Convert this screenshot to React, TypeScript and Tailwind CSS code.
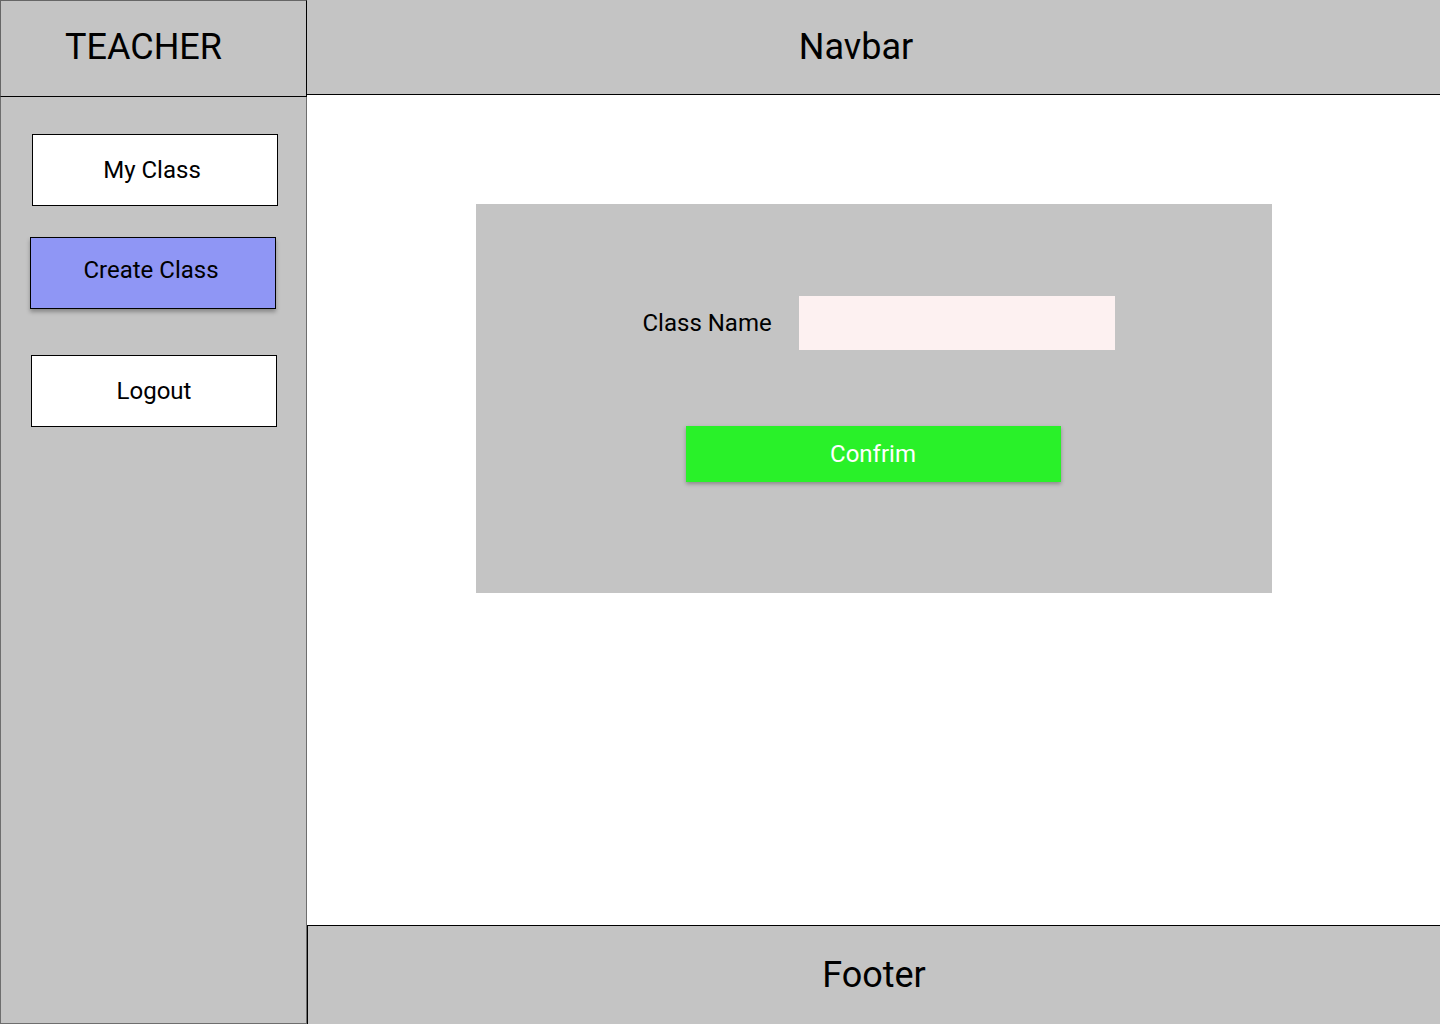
export default function App() {
  return (
    <div
      className="grid h-[1024px] w-[1440px] grid-cols-[307px_1fr] bg-white text-black"
      style={{ fontFamily: "Roboto, 'Liberation Sans', sans-serif" }}
    >
      {/* left column */}
      <div className="flex h-[1024px] flex-col">
        <div className="flex h-[97px] items-center border-t border-l border-r border-b border-t-[#666] border-l-[#666] border-r-black border-b-black bg-[#c4c4c4] pb-[4px] pl-[64px]">
          <span className="text-[36px] leading-none">TEACHER</span>
        </div>
        <aside className="flex flex-1 flex-col border-x border-b border-[#6e6e6e] bg-[#c4c4c4]">
          <button className="ml-[31px] mt-[37px] flex h-[72px] w-[246px] items-center justify-center border border-black bg-white pr-[6px] text-[24px]">
            My Class
          </button>
          <button className="ml-[29px] mt-[31px] flex h-[72px] w-[246px] items-center justify-center border border-black bg-[#8f96f5] pb-[6px] pr-[4px] text-[24px] shadow-[0_3px_4px_rgba(0,0,0,0.3)]">
            Create Class
          </button>
          <button className="ml-[30px] mt-[46px] flex h-[72px] w-[246px] items-center justify-center border border-black bg-white text-[24px]">
            Logout
          </button>
        </aside>
      </div>

      {/* right column */}
      <div className="flex h-[1024px] flex-col">
        <header className="flex h-[95px] items-center justify-center border-b border-black bg-[#c4c4c4] pr-[35px]">
          <span className="text-[36px] leading-none">Navbar</span>
        </header>
        <main className="flex flex-1 justify-center pt-[109px]">
          <div className="flex h-[389px] w-[796px] flex-col bg-[#c4c4c4] pt-[92px]">
            <div className="flex items-center pl-[167px]">
              <label className="w-[156px] text-[24px]">Class Name</label>
              <input className="h-[54px] w-[316px] bg-[#fdf1f1] outline-none" />
            </div>
            <button className="ml-[210px] mt-[76px] flex h-[56px] w-[375px] items-center justify-center bg-[#29f129] text-[24px] text-white shadow-[0_2px_4px_rgba(0,0,0,0.3)]">
              Confrim
            </button>
          </div>
        </main>
        <footer className="flex h-[99px] items-center justify-center border-t border-l border-black bg-[#c4c4c4]">
          <span className="text-[36px] leading-none">Footer</span>
        </footer>
      </div>
    </div>
  );
}
